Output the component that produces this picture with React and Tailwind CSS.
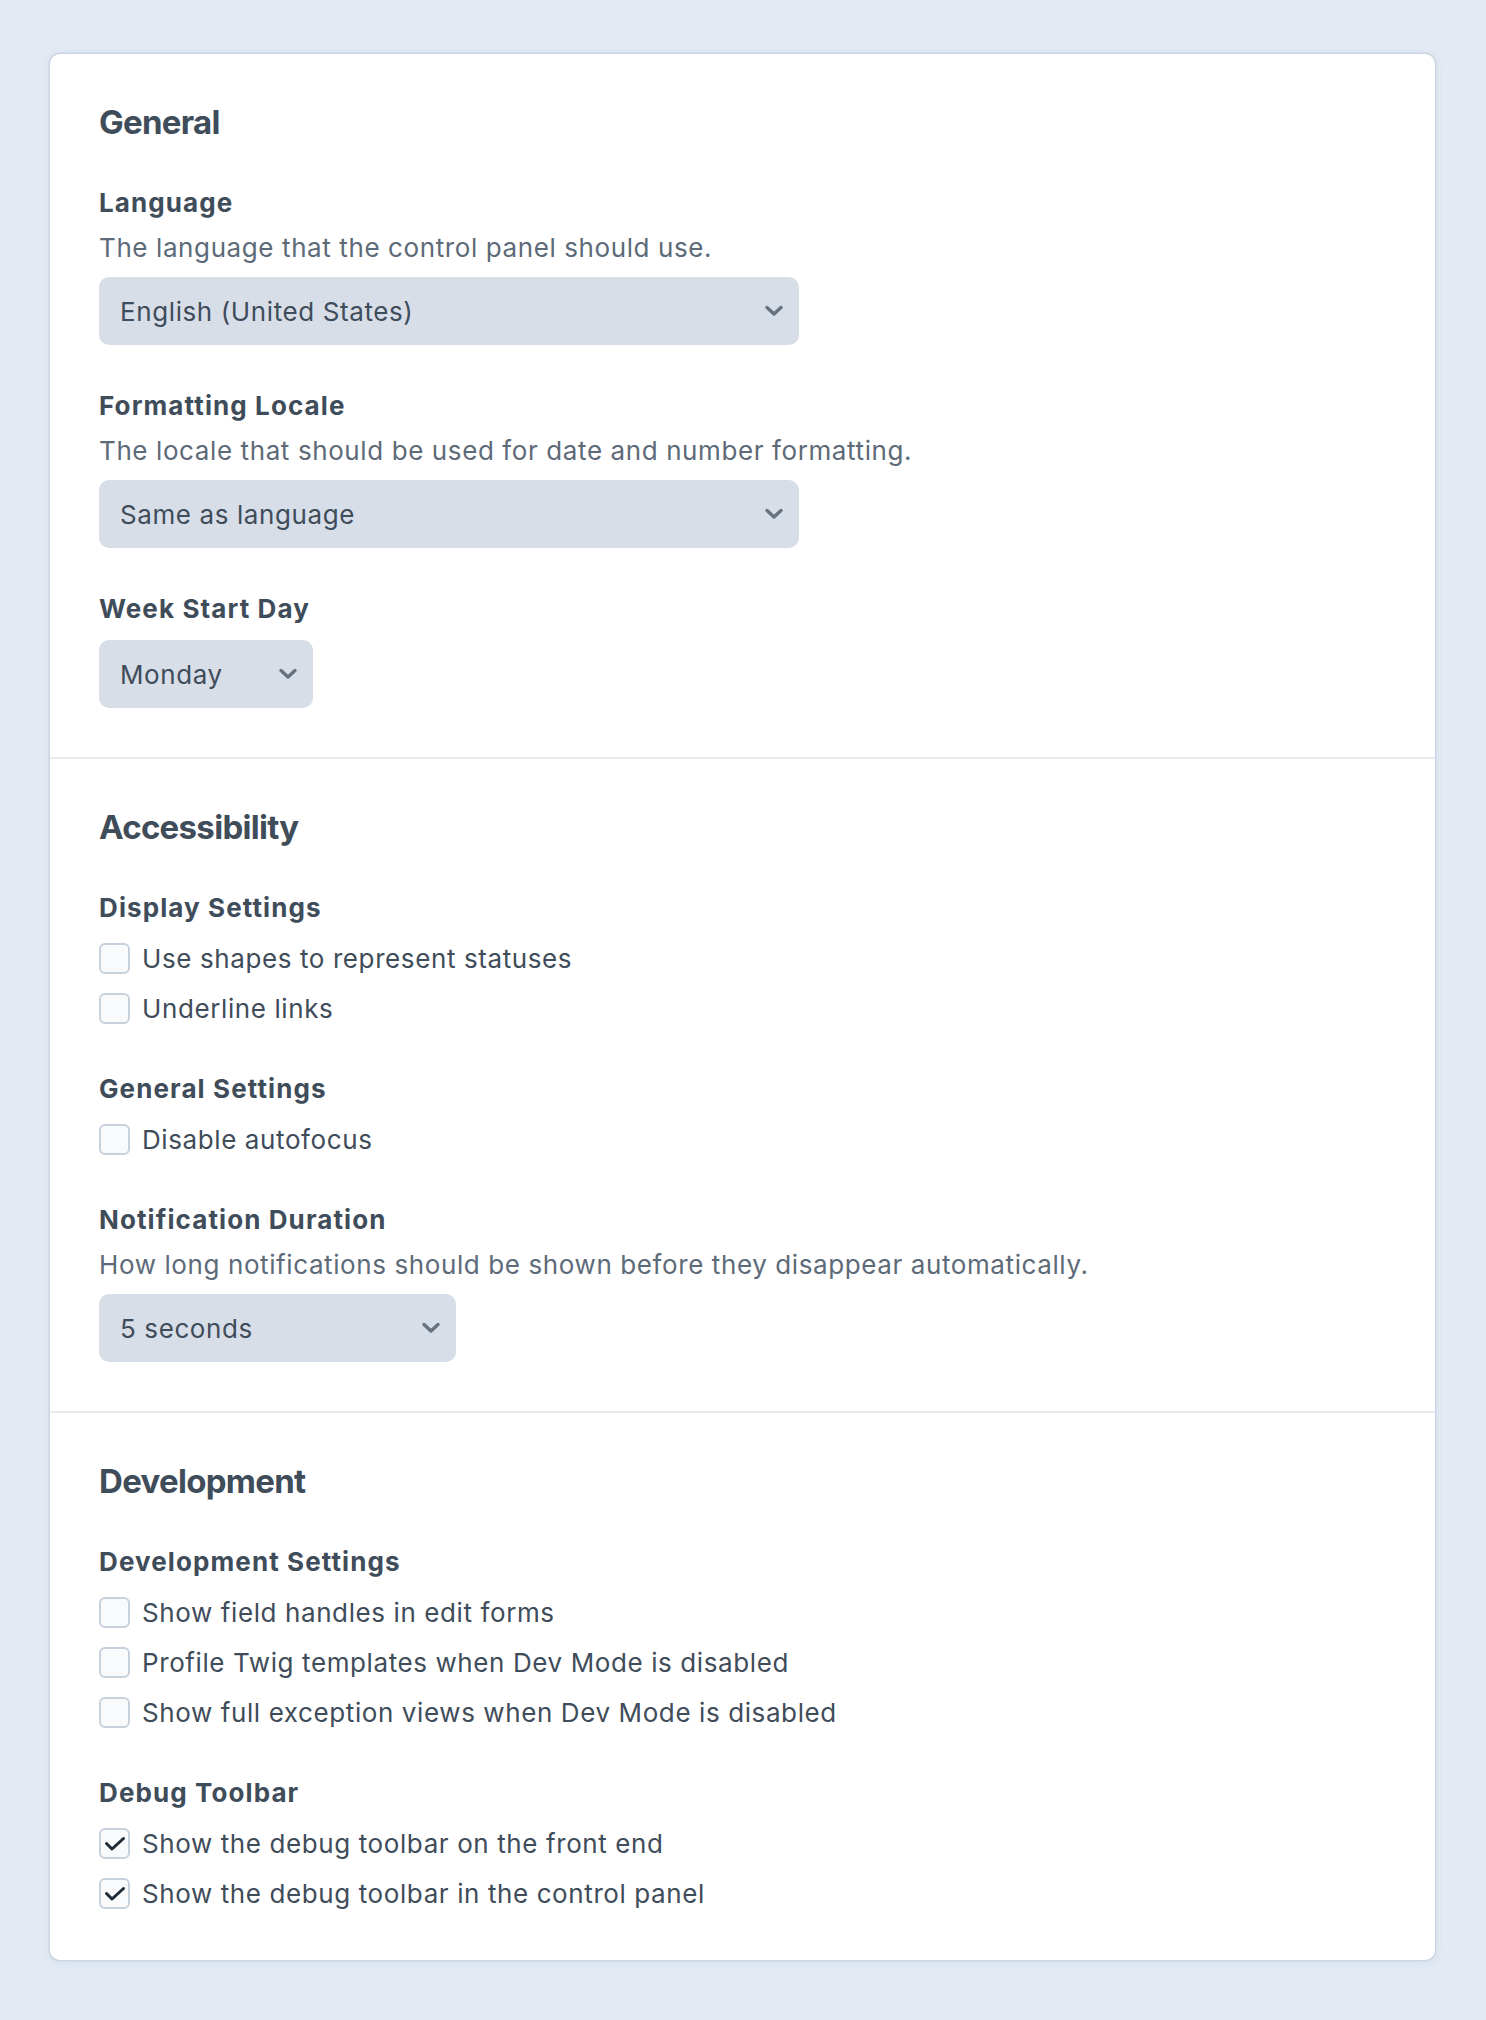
import React from 'react';

const SECTIONS = [
  {
    title: 'General',
    fields: [
      {
        label: 'Language',
        desc: 'The language that the control panel should use.',
        select: { value: 'English (United States)', width: 'w-[700px]' },
      },
      {
        label: 'Formatting Locale',
        desc: 'The locale that should be used for date and number formatting.',
        select: { value: 'Same as language', width: 'w-[700px]' },
      },
      {
        label: 'Week Start Day',
        select: { value: 'Monday', width: 'w-[214px]' },
      },
    ],
  },
  {
    title: 'Accessibility',
    fields: [
      {
        label: 'Display Settings',
        checks: [
          { text: 'Use shapes to represent statuses' },
          { text: 'Underline links' },
        ],
      },
      {
        label: 'General Settings',
        checks: [{ text: 'Disable autofocus' }],
      },
      {
        label: 'Notification Duration',
        desc: 'How long notifications should be shown before they disappear automatically.',
        select: { value: '5 seconds', width: 'w-[357px]' },
      },
    ],
  },
  {
    title: 'Development',
    fields: [
      {
        label: 'Development Settings',
        checks: [
          { text: 'Show field handles in edit forms' },
          { text: 'Profile Twig templates when Dev Mode is disabled' },
          { text: 'Show full exception views when Dev Mode is disabled' },
        ],
      },
      {
        label: 'Debug Toolbar',
        checks: [
          { text: 'Show the debug toolbar on the front end', checked: true },
          { text: 'Show the debug toolbar in the control panel', checked: true },
        ],
      },
    ],
  },
];

function Chevron() {
  return (
    <svg width="20" height="14" viewBox="0 0 20 14" fill="none" className="shrink-0">
      <polyline
        points="3,3.5 10,10 17,3.5"
        stroke="#66727f"
        strokeWidth="3.4"
        strokeLinecap="round"
        strokeLinejoin="round"
      />
    </svg>
  );
}

function Select({ value, width }) {
  return (
    <div
      className={
        'flex h-[68px] items-center justify-between rounded-[10px] bg-[#d7dee8] pl-[21px] pr-[15px] text-[#3f4c5a] ' +
        width
      }
    >
      <span>{value}</span>
      <Chevron />
    </div>
  );
}

function Checkbox({ checked }) {
  return (
    <span className="flex h-[31px] w-[31px] shrink-0 items-center justify-center rounded-[6px] border-2 border-[#c6d1dd] bg-[#f8fafc]">
      {checked && (
        <svg width="22" height="16" viewBox="0 0 22 16" fill="none">
          <polyline
            points="2.5,7.5 8,13 19.5,2.5"
            stroke="#1e2a36"
            strokeWidth="3"
            strokeLinecap="round"
            strokeLinejoin="round"
          />
        </svg>
      )}
    </span>
  );
}

function Field({ field, first, afterChecks }) {
  return (
    <div className={first ? '' : afterChecks ? 'mt-[43px]' : 'mt-[42px]'}>
      <div className="font-bold leading-[37px] tracking-[1.1px] text-[#3f4c5a]">{field.label}</div>
      {field.desc && <div className="mt-[8px] leading-[37px] text-[#5d6a78]">{field.desc}</div>}
      {field.select && (
        <div className={field.desc ? 'mt-[11px]' : 'mt-[13px]'}>
          <Select {...field.select} />
        </div>
      )}
      {field.checks && (
        <div className="mt-[14px] flex flex-col gap-[13px]">
          {field.checks.map((c) => (
            <label key={c.text} className="flex h-[37px] items-center gap-[12px] text-[#3f4c5a]">
              <Checkbox checked={c.checked} />
              <span className="leading-[37px]">{c.text}</span>
            </label>
          ))}
        </div>
      )}
    </div>
  );
}

export default function App() {
  return (
    <div className="min-h-screen bg-[#e3eaf4] pl-[50px] pt-[54px] pb-[60px] font-['Inter','Liberation_Sans',sans-serif] text-[26px] tracking-[0.6px]">
      <div className="w-[1385px] overflow-hidden rounded-[10px] bg-white shadow-[0_0_0_1.5px_#cbd6e2,0_2px_10px_rgba(180,196,214,0.35)]">
        {SECTIONS.map((s, i) => (
          <section
            key={s.title}
            className={
              'px-[49px] pt-[48px] ' +
              (i === SECTIONS.length - 1 ? 'pb-[48px] ' : 'pb-[49px] ') +
              (i > 0 ? 'border-t-2 border-[#e8eaed]' : '')
            }
          >
            <h2 className="mb-[42px] text-[33px] font-bold leading-[40px] tracking-[-0.7px] text-[#3f4c5a]">
              {s.title}
            </h2>
            {s.fields.map((f, j) => (
              <Field
                key={f.label}
                field={f}
                first={j === 0}
                afterChecks={j > 0 && !!s.fields[j - 1].checks}
              />
            ))}
          </section>
        ))}
      </div>
    </div>
  );
}
